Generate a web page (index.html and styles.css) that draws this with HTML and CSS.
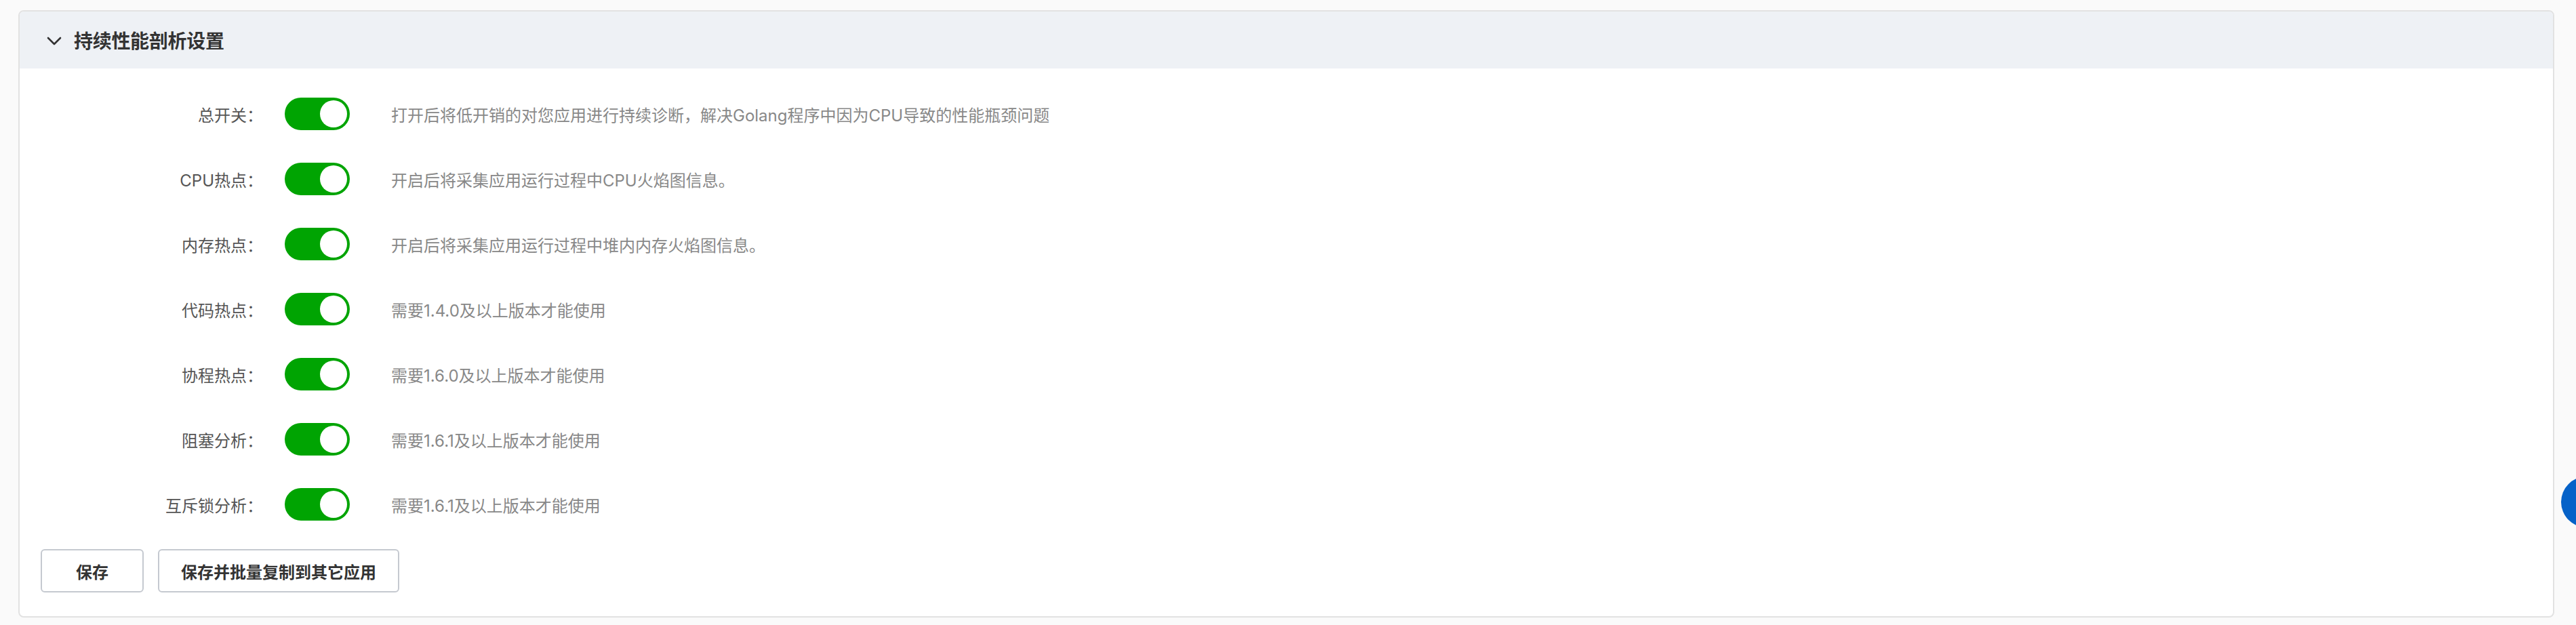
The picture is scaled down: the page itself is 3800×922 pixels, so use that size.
FILE: index.html
```html
<!DOCTYPE html>
<html lang="zh-CN">
<head>
<meta charset="utf-8">
<title>持续性能剖析设置</title>
<link rel="stylesheet" href="styles.css">
</head>
<body>
<div class="card">
  <div class="card-header">
    <svg class="chevron" width="22" height="13" viewBox="0 0 22 13"><path d="M2 2 L11 11 L20 2" fill="none" stroke="#333" stroke-width="2.6" stroke-linecap="round" stroke-linejoin="round"/></svg>
    <span class="title">持续性能剖析设置</span>
  </div>
  <div class="card-body">
    <div class="form-row">
      <label class="form-label">总开关：</label>
      <span class="switch on"><span class="knob"></span></span>
      <span class="desc">打开后将低开销的对您应用进行持续诊断，解决Golang程序中因为CPU导致的性能瓶颈问题</span>
    </div>
    <div class="form-row">
      <label class="form-label">CPU热点：</label>
      <span class="switch on"><span class="knob"></span></span>
      <span class="desc">开启后将采集应用运行过程中CPU火焰图信息。</span>
    </div>
    <div class="form-row">
      <label class="form-label">内存热点：</label>
      <span class="switch on"><span class="knob"></span></span>
      <span class="desc">开启后将采集应用运行过程中堆内内存火焰图信息。</span>
    </div>
    <div class="form-row">
      <label class="form-label">代码热点：</label>
      <span class="switch on"><span class="knob"></span></span>
      <span class="desc">需要1.4.0及以上版本才能使用</span>
    </div>
    <div class="form-row">
      <label class="form-label">协程热点：</label>
      <span class="switch on"><span class="knob"></span></span>
      <span class="desc">需要1.6.0及以上版本才能使用</span>
    </div>
    <div class="form-row">
      <label class="form-label">阻塞分析：</label>
      <span class="switch on"><span class="knob"></span></span>
      <span class="desc">需要1.6.1及以上版本才能使用</span>
    </div>
    <div class="form-row last">
      <label class="form-label">互斥锁分析：</label>
      <span class="switch on"><span class="knob"></span></span>
      <span class="desc">需要1.6.1及以上版本才能使用</span>
    </div>
    <div class="actions">
      <button class="btn btn-save">保存</button>
      <button class="btn">保存并批量复制到其它应用</button>
    </div>
  </div>
</div>
<div class="float-btn"></div>
</body>
</html>
```
FILE: styles.css
```css
html, body {
  margin: 0;
  padding: 0;
}
body {
  background: #fafafa;
  font-family: "Inter", "Noto Sans CJK SC", sans-serif;
  width: 3800px;
  height: 922px;
  overflow: hidden;
  position: relative;
}
.card {
  margin: 15px 32px 0 27px;
  border: 2px solid #e2e2e2;
  border-radius: 8px;
  background: #ffffff;
  overflow: hidden;
}
.card-header {
  height: 84px;
  background: #eef1f5;
  display: flex;
  align-items: center;
  padding-left: 40px;
  gap: 18px;
}
.chevron {
  display: block;
  margin-top: 2px;
}
.title {
  font-size: 28px;
  font-weight: 600;
  color: #333333;
  letter-spacing: -0.3px;
}
.card-body {
  padding: 43px 0 35px 31px;
}
.form-row {
  display: flex;
  align-items: center;
  height: 48px;
  margin-bottom: 48px;
}
.form-row.last {
  margin-bottom: 0;
}
.form-label {
  width: 328px;
  text-align: right;
  font-size: 24px;
  color: #555555;
  white-space: nowrap;
}
.switch {
  margin-left: 32px;
  width: 96px;
  height: 48px;
  border-radius: 24px;
  background: #00a402;
  display: flex;
  align-items: center;
  justify-content: flex-end;
  padding: 0 4px;
  box-sizing: border-box;
  flex: none;
}
.knob {
  width: 40px;
  height: 40px;
  border-radius: 50%;
  background: #ffffff;
}
.desc {
  margin-left: 61px;
  font-size: 24px;
  color: #888888;
  white-space: nowrap;
}
.actions {
  display: flex;
  gap: 21px;
  margin-top: 42px;
}
.btn {
  height: 64px;
  padding: 0 32px;
  border: 2px solid #c5c9d0;
  border-radius: 6px;
  background: #ffffff;
  font-family: "Inter", "Noto Sans CJK SC", sans-serif;
  font-size: 24px;
  font-weight: 600;
  color: #333333;
}
.btn-save {
  min-width: 152px;
}
.float-btn {
  position: absolute;
  left: 3778px;
  top: 703px;
  width: 75px;
  height: 75px;
  border-radius: 50%;
  background: #0662c8;
}
```
